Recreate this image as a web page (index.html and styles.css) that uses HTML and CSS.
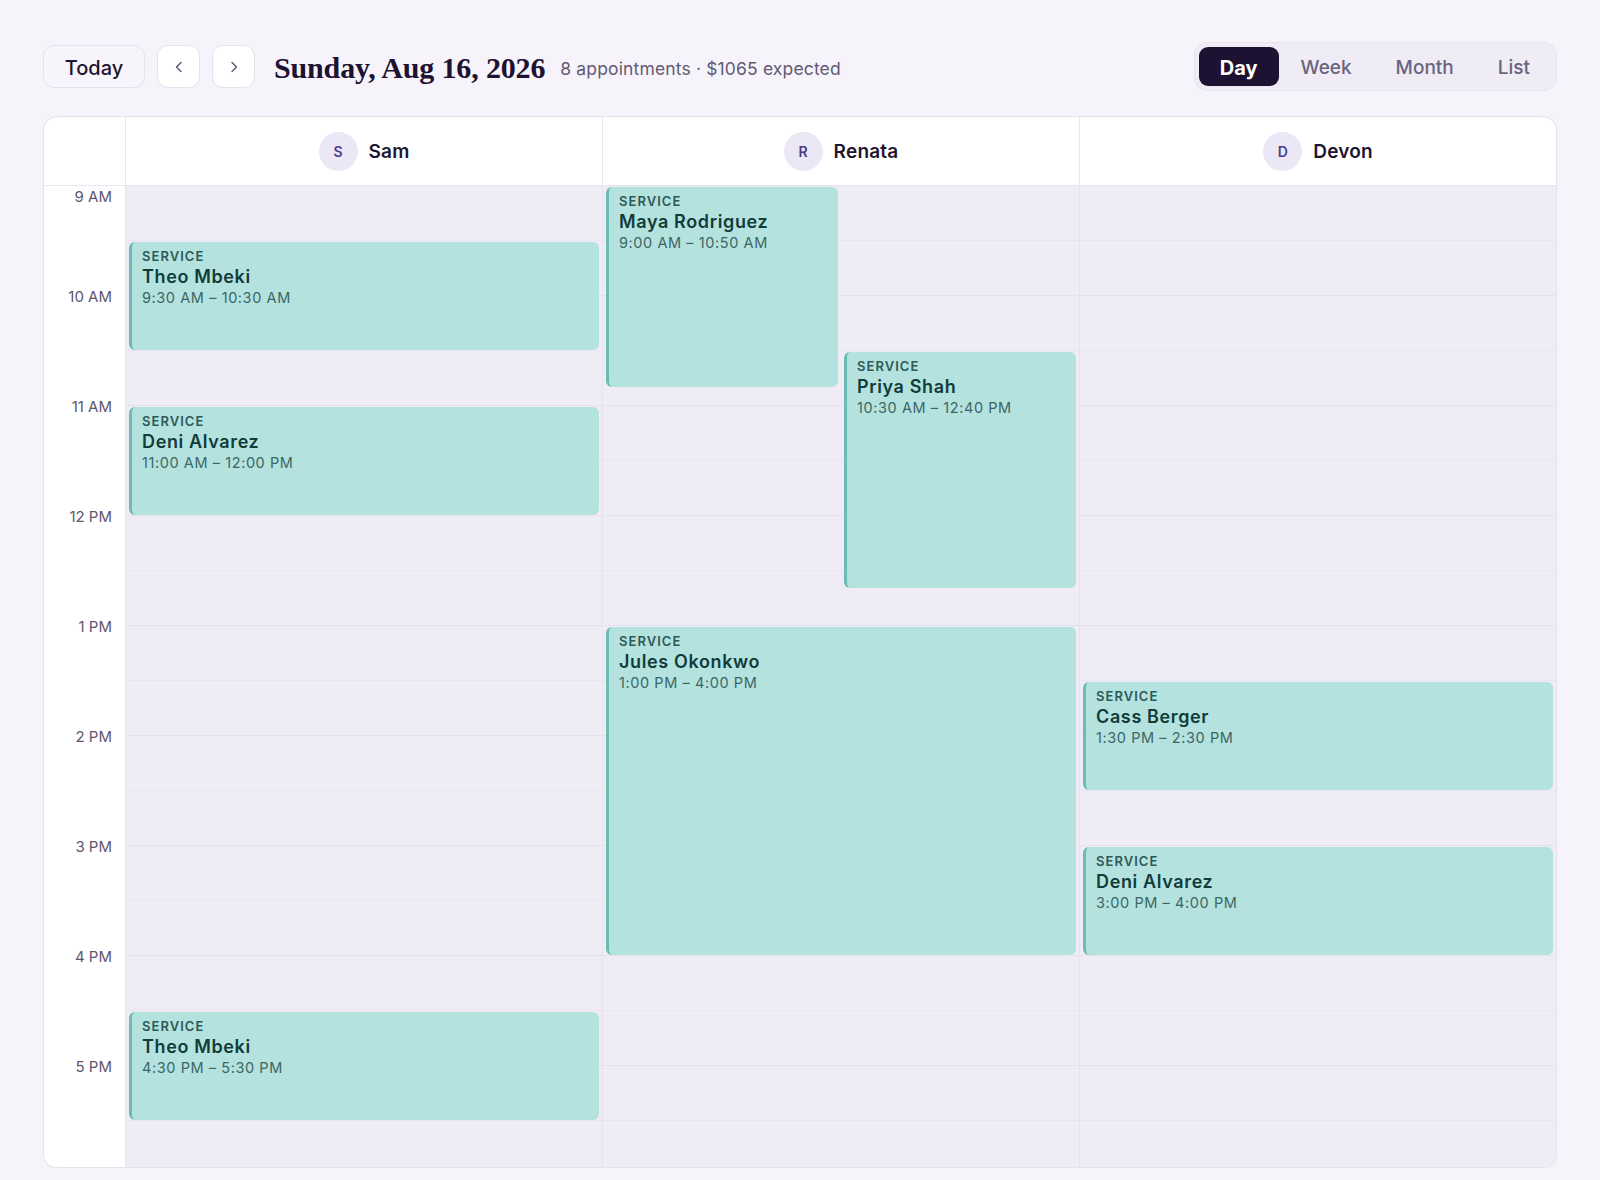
FILE: index.html
```html
<!DOCTYPE html>
<html lang="en">
<head>
<meta charset="utf-8">
<title>Day view</title>
<link rel="stylesheet" href="styles.css">
</head>
<body>
<div class="page">
  <header class="toolbar">
    <button class="btn btn-today">Today</button>
    <button class="btn btn-icon" aria-label="Previous day">
      <svg width="16" height="16" viewBox="0 0 16 16"><path d="M10 3.5 L5.5 8 L10 12.5" fill="none" stroke="currentColor" stroke-width="1.4" stroke-linecap="round" stroke-linejoin="round"/></svg>
    </button>
    <button class="btn btn-icon" aria-label="Next day">
      <svg width="16" height="16" viewBox="0 0 16 16"><path d="M6 3.5 L10.5 8 L6 12.5" fill="none" stroke="currentColor" stroke-width="1.4" stroke-linecap="round" stroke-linejoin="round"/></svg>
    </button>
    <h1 class="title">Sunday, Aug 16, 2026</h1>
    <span class="summary">8 appointments · $1065 expected</span>
    <nav class="views">
      <button class="view active">Day</button>
      <button class="view">Week</button>
      <button class="view">Month</button>
      <button class="view">List</button>
    </nav>
  </header>

  <section class="calendar">
    <div class="cal-head">
      <div class="corner"></div>
      <div class="staff"><span class="avatar">S</span><span class="staff-name">Sam</span></div>
      <div class="staff"><span class="avatar">R</span><span class="staff-name">Renata</span></div>
      <div class="staff"><span class="avatar">D</span><span class="staff-name">Devon</span></div>
    </div>
    <div class="cal-body">
      <div class="grid">
        <div class="times">
          <div class="slot first"><span>9 AM</span></div>
          <div class="slot"><span>10 AM</span></div>
          <div class="slot"><span>11 AM</span></div>
          <div class="slot"><span>12 PM</span></div>
          <div class="slot"><span>1 PM</span></div>
          <div class="slot"><span>2 PM</span></div>
          <div class="slot"><span>3 PM</span></div>
          <div class="slot"><span>4 PM</span></div>
          <div class="slot"><span>5 PM</span></div>
        </div>

        <div class="col">
          <div class="event" style="top:56px;height:108px">
            <div class="ev-type">SERVICE</div>
            <div class="ev-name">Theo Mbeki</div>
            <div class="ev-time">9:30 AM – 10:30 AM</div>
          </div>
          <div class="event" style="top:221px;height:108px">
            <div class="ev-type">SERVICE</div>
            <div class="ev-name">Deni Alvarez</div>
            <div class="ev-time">11:00 AM – 12:00 PM</div>
          </div>
          <div class="event" style="top:826px;height:108px">
            <div class="ev-type">SERVICE</div>
            <div class="ev-name">Theo Mbeki</div>
            <div class="ev-time">4:30 PM – 5:30 PM</div>
          </div>
        </div>

        <div class="col">
          <div class="event lane-a" style="top:1px;height:200px">
            <div class="ev-type">SERVICE</div>
            <div class="ev-name">Maya Rodriguez</div>
            <div class="ev-time">9:00 AM – 10:50 AM</div>
          </div>
          <div class="event lane-b" style="top:166px;height:236px">
            <div class="ev-type">SERVICE</div>
            <div class="ev-name">Priya Shah</div>
            <div class="ev-time">10:30 AM – 12:40 PM</div>
          </div>
          <div class="event" style="top:441px;height:328px">
            <div class="ev-type">SERVICE</div>
            <div class="ev-name">Jules Okonkwo</div>
            <div class="ev-time">1:00 PM – 4:00 PM</div>
          </div>
        </div>

        <div class="col">
          <div class="event" style="top:496px;height:108px">
            <div class="ev-type">SERVICE</div>
            <div class="ev-name">Cass Berger</div>
            <div class="ev-time">1:30 PM – 2:30 PM</div>
          </div>
          <div class="event" style="top:661px;height:108px">
            <div class="ev-type">SERVICE</div>
            <div class="ev-name">Deni Alvarez</div>
            <div class="ev-time">3:00 PM – 4:00 PM</div>
          </div>
        </div>
      </div>
    </div>
  </section>
</div>
</body>
</html>
```

FILE: styles.css
```css
* { box-sizing: border-box; }

html, body {
  margin: 0;
  padding: 0;
  background: #f6f4fa;
  font-family: "Inter", "Noto Sans", "Liberation Sans", sans-serif;
  color: #1d1430;
}

.page {
  padding: 42px 43px 0;
}

/* ---------- toolbar ---------- */
.toolbar {
  display: flex;
  align-items: center;
  height: 49px;
  gap: 12px;
  margin-bottom: 25px;
}

.btn {
  font-family: inherit;
  border: 1px solid #e6e1ee;
  border-radius: 11px;
  height: 43px;
  cursor: pointer;
  display: inline-flex;
  align-items: center;
  justify-content: center;
  padding: 0;
}

.btn-today {
  width: 102px;
  background: #f7f5fb;
  font-size: 20px;
  font-weight: 500;
  color: #1d1430;
  padding-top: 2px;
}

.btn-icon {
  width: 43px;
  background: #ffffff;
  color: #5a536c;
}

.title {
  margin: 0 0 0 7px;
  font-family: "Liberation Serif", "DejaVu Serif", serif;
  font-weight: 700;
  font-size: 30px;
  letter-spacing: -0.15px;
  color: #1e1233;
  white-space: nowrap;
  padding-top: 3px;
}

.summary {
  margin-left: 3px;
  font-size: 17.5px;
  letter-spacing: 0.15px;
  color: #625a75;
  white-space: nowrap;
  padding-top: 3px;
}

.views {
  margin-left: auto;
  display: flex;
  align-items: center;
  background: #efecf5;
  border: 1px solid #e7e3ef;
  border-radius: 13px;
  padding: 4px;
}

.view {
  font-family: inherit;
  border: 0;
  background: transparent;
  height: 39px;
  padding: 2px 22px 0;
  border-radius: 9px;
  font-size: 19px;
  font-weight: 500;
  color: #6a6380;
  cursor: pointer;
}

.view.active {
  background: #1e1233;
  color: #ffffff;
  font-weight: 700;
  font-size: 20px;
  padding: 2px 21px 0;
}

/* ---------- calendar card ---------- */
.calendar {
  height: 1052px;
  background: #ffffff;
  border: 1px solid #e6e1ee;
  border-radius: 14px;
  overflow: hidden;
  display: flex;
  flex-direction: column;
  box-shadow: 0 1px 2px rgba(40, 20, 80, 0.04);
}

.cal-head,
.grid {
  display: grid;
  grid-template-columns: 81px repeat(3, 1fr);
}

.cal-head {
  height: 69px;
  flex: none;
  border-bottom: 1px solid #e8e4ef;
}

.staff {
  border-left: 1px solid #ebe7f1;
  display: flex;
  align-items: center;
  justify-content: center;
  gap: 11px;
  padding-top: 1px;
}

.avatar {
  width: 39px;
  height: 39px;
  border-radius: 50%;
  background: #ece7f6;
  color: #4b3d85;
  font-size: 14px;
  font-weight: 600;
  display: inline-flex;
  align-items: center;
  justify-content: center;
}

.staff-name {
  font-size: 19px;
  font-weight: 600;
  letter-spacing: 0.01em;
  color: #1e1530;
}

.cal-body {
  flex: 1;
  overflow: hidden;
}

.grid {
  height: 990px;
}

.times {
  background: #ffffff;
}

.slot {
  display: flow-root;
  height: 110px;
  text-align: right;
  padding-right: 13px;
}

.slot span {
  display: block;
  margin-top: -8px;
  height: 18px;
  line-height: 18px;
  font-size: 15px;
  color: #5d5670;
}

.slot.first span {
  margin-top: 2px;
}

.col {
  position: relative;
  border-left: 1px solid #e6e2ee;
  background-color: #efecf6;
  background-image: repeating-linear-gradient(
    to bottom,
    transparent 0 54px,
    #e8e4f0 54px 55px,
    transparent 55px 109px,
    #e5e1ed 109px 110px
  );
}

/* ---------- events ---------- */
.event {
  position: absolute;
  left: 3px;
  right: 3px;
  background: #b4e2df;
  border-left: 3px solid #6cbcb6;
  border-radius: 6px;
  padding: 5px 10px;
  overflow: hidden;
}

.event.lane-a {
  right: calc(50% + 3px);
}

.event.lane-b {
  left: calc(50% + 3px);
}

.ev-type {
  font-size: 13px;
  font-weight: 600;
  letter-spacing: 0.08em;
  line-height: 19px;
  color: #2e5957;
}

.ev-name {
  font-size: 18px;
  font-weight: 600;
  letter-spacing: 0.035em;
  line-height: 22px;
  color: #113c3a;
}

.ev-time {
  font-size: 14.5px;
  line-height: 20px;
  letter-spacing: 0.04em;
  color: #3c6664;
}
```
